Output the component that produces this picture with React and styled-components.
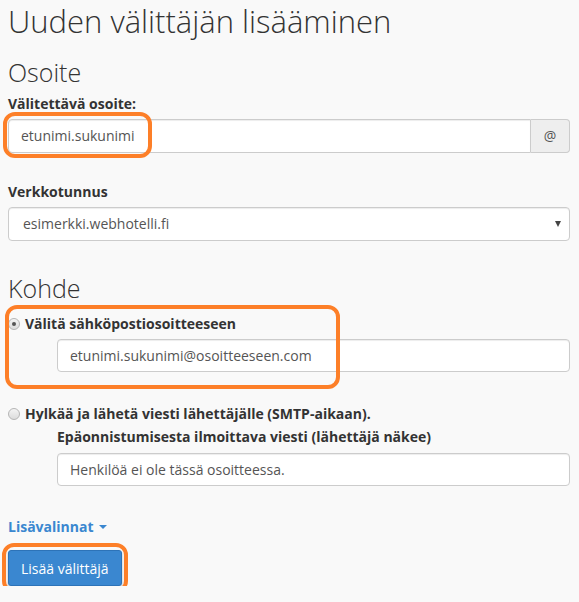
import styled, { createGlobalStyle } from "styled-components";

const GlobalStyle = createGlobalStyle`
  body {
    margin: 0;
    background: #f9f9f9;
    font-family: "Open Sans", "Liberation Sans", sans-serif;
    color: #333;
  }
`;

const Page = styled.div`
  width: 562px;
  padding: 4px 0 0 8px;
`;

const Title = styled.h1`
  font-size: 31px;
  font-weight: 300;
  line-height: 1.1;
  margin: 0 0 21px;
  color: #333;
`;

const SectionTitle = styled.h2`
  font-size: 25px;
  font-weight: 300;
  line-height: 1.1;
  margin: ${(p) => p.$top || 0}px 0 ${(p) => p.$bottom || 0}px;
  color: #333;
`;

const Label = styled.label`
  display: block;
  font-size: 14px;
  font-weight: 700;
  line-height: 20px;
  margin-bottom: ${(p) => (p.$tight ? 6 : 5)}px;
  margin-top: ${(p) => p.$top || 0}px;
  color: #333;
`;

const FormGroup = styled.div`
  position: relative;
  margin-top: ${(p) => p.$top || 0}px;
`;

const InputGroup = styled.div`
  position: relative;
  display: flex;
  height: 34px;
`;

const Input = styled.input`
  box-sizing: border-box;
  display: block;
  width: 100%;
  height: ${(p) => (p.$small ? 33 : 34)}px;
  padding: 6px 12px;
  font-family: inherit;
  font-size: 14px;
  color: #555;
  background: #fff;
  border: 1px solid #ccc;
  border-radius: ${(p) => (p.$joined ? "4px 0 0 4px" : "4px")};
  box-shadow: inset 0 1px 1px rgba(0, 0, 0, 0.075);
  outline: none;
`;

const Addon = styled.span`
  box-sizing: border-box;
  width: 39px;
  flex: none;
  display: flex;
  align-items: center;
  justify-content: center;
  font-size: 14px;
  color: #555;
  background: #eee;
  border: 1px solid #ccc;
  border-left: none;
  border-radius: 0 4px 4px 0;
`;

const SelectBox = styled.div`
  box-sizing: border-box;
  display: flex;
  align-items: center;
  justify-content: space-between;
  height: 34px;
  padding: 0 8px 0 14px;
  font-size: 14px;
  color: #555;
  background: #fff;
  border: 1px solid #ccc;
  border-radius: 4px;
  box-shadow: inset 0 1px 1px rgba(0, 0, 0, 0.075);
`;

const Caret = styled.span`
  width: 0;
  height: 0;
  border-left: 3.5px solid transparent;
  border-right: 3.5px solid transparent;
  border-top: 6px solid #444;
`;

const RadioRow = styled.label`
  display: flex;
  align-items: center;
  gap: 5px;
  font-size: 14px;
  font-weight: 700;
  line-height: 20px;
  color: #333;
  margin-top: ${(p) => p.$top || 0}px;
`;

const Radio = styled.span`
  box-sizing: border-box;
  width: 12px;
  height: 12px;
  border-radius: 50%;
  border: 1px solid #b5b5b5;
  background: linear-gradient(#f4f4f4, #dcdcdc);
  display: flex;
  align-items: center;
  justify-content: center;
  &::after {
    content: "";
    width: 4px;
    height: 4px;
    border-radius: 50%;
    background: ${(p) => (p.$checked ? "#555" : "transparent")};
  }
`;

const Indented = styled.div`
  padding-left: 49px;
  margin-top: ${(p) => p.$top || 0}px;
`;

const Highlight = styled.div`
  position: absolute;
  top: ${(p) => p.$t}px;
  left: ${(p) => p.$l}px;
  width: ${(p) => p.$w}px;
  height: ${(p) => p.$h}px;
  border: 4px solid #fd7f28;
  border-radius: 12px;
  box-sizing: border-box;
  pointer-events: none;
`;

const MoreLink = styled.a`
  display: inline-flex;
  align-items: center;
  gap: 5px;
  margin-top: 31px;
  font-size: 14px;
  font-weight: 700;
  line-height: 20px;
  color: #3a87d0;
  text-decoration: none;
`;

const SmallCaret = styled.span`
  width: 0;
  height: 0;
  border-left: 4px solid transparent;
  border-right: 4px solid transparent;
  border-top: 4px solid #3a87d0;
`;

const ButtonWrap = styled.div`
  position: relative;
  display: inline-block;
  margin-top: 13px;
`;

const Button = styled.button`
  display: block;
  height: 36px;
  padding: 6px 12px;
  font-family: inherit;
  font-size: 14px;
  color: #fff;
  background: #3a87d0;
  border: 1px solid #2d73b8;
  border-radius: 3px;
  box-shadow: 0 2px 3px rgba(0, 0, 0, 0.25);
`;

export default function App() {
  return (
    <>
      <GlobalStyle />
      <Page>
        <Title>Uuden välittäjän lisääminen</Title>
        <SectionTitle $bottom={7}>Osoite</SectionTitle>

        <Label>Välitettävä osoite:</Label>
        <InputGroup>
          <Input $joined defaultValue="etunimi.sukunimi" />
          <Addon>@</Addon>
          <Highlight $t={-7} $l={-5} $w={149} $h={46} />
        </InputGroup>

        <Label $top={29}>Verkkotunnus</Label>
        <SelectBox>
          <span>esimerkki.webhotelli.fi</span>
          <Caret />
        </SelectBox>

        <SectionTitle $top={34}>Kohde</SectionTitle>

        <FormGroup $top={12}>
          <RadioRow>
            <Radio $checked />
            Välitä sähköpostiosoitteeseen
          </RadioRow>
          <Indented $top={5}>
            <Input $small defaultValue="etunimi.sukunimi@osoitteeseen.com" />
          </Indented>
          <Highlight $t={-9} $l={-3} $w={335} $h={84} />
        </FormGroup>

        <RadioRow $top={32}>
          <Radio />
          Hylkää ja lähetä viesti lähettäjälle (SMTP-aikaan).
        </RadioRow>
        <Indented $top={3}>
          <Label $tight>Epäonnistumisesta ilmoittava viesti (lähettäjä näkee)</Label>
          <Input $small defaultValue="Henkilöä ei ole tässä osoitteessa." />
        </Indented>

        <MoreLink href="#">
          Lisävalinnat
          <SmallCaret />
        </MoreLink>
        <br />
        <ButtonWrap>
          <Button>Lisää välittäjä</Button>
          <Highlight $t={-7} $l={-6} $w={126} $h={50} />
        </ButtonWrap>
      </Page>
    </>
  );
}
